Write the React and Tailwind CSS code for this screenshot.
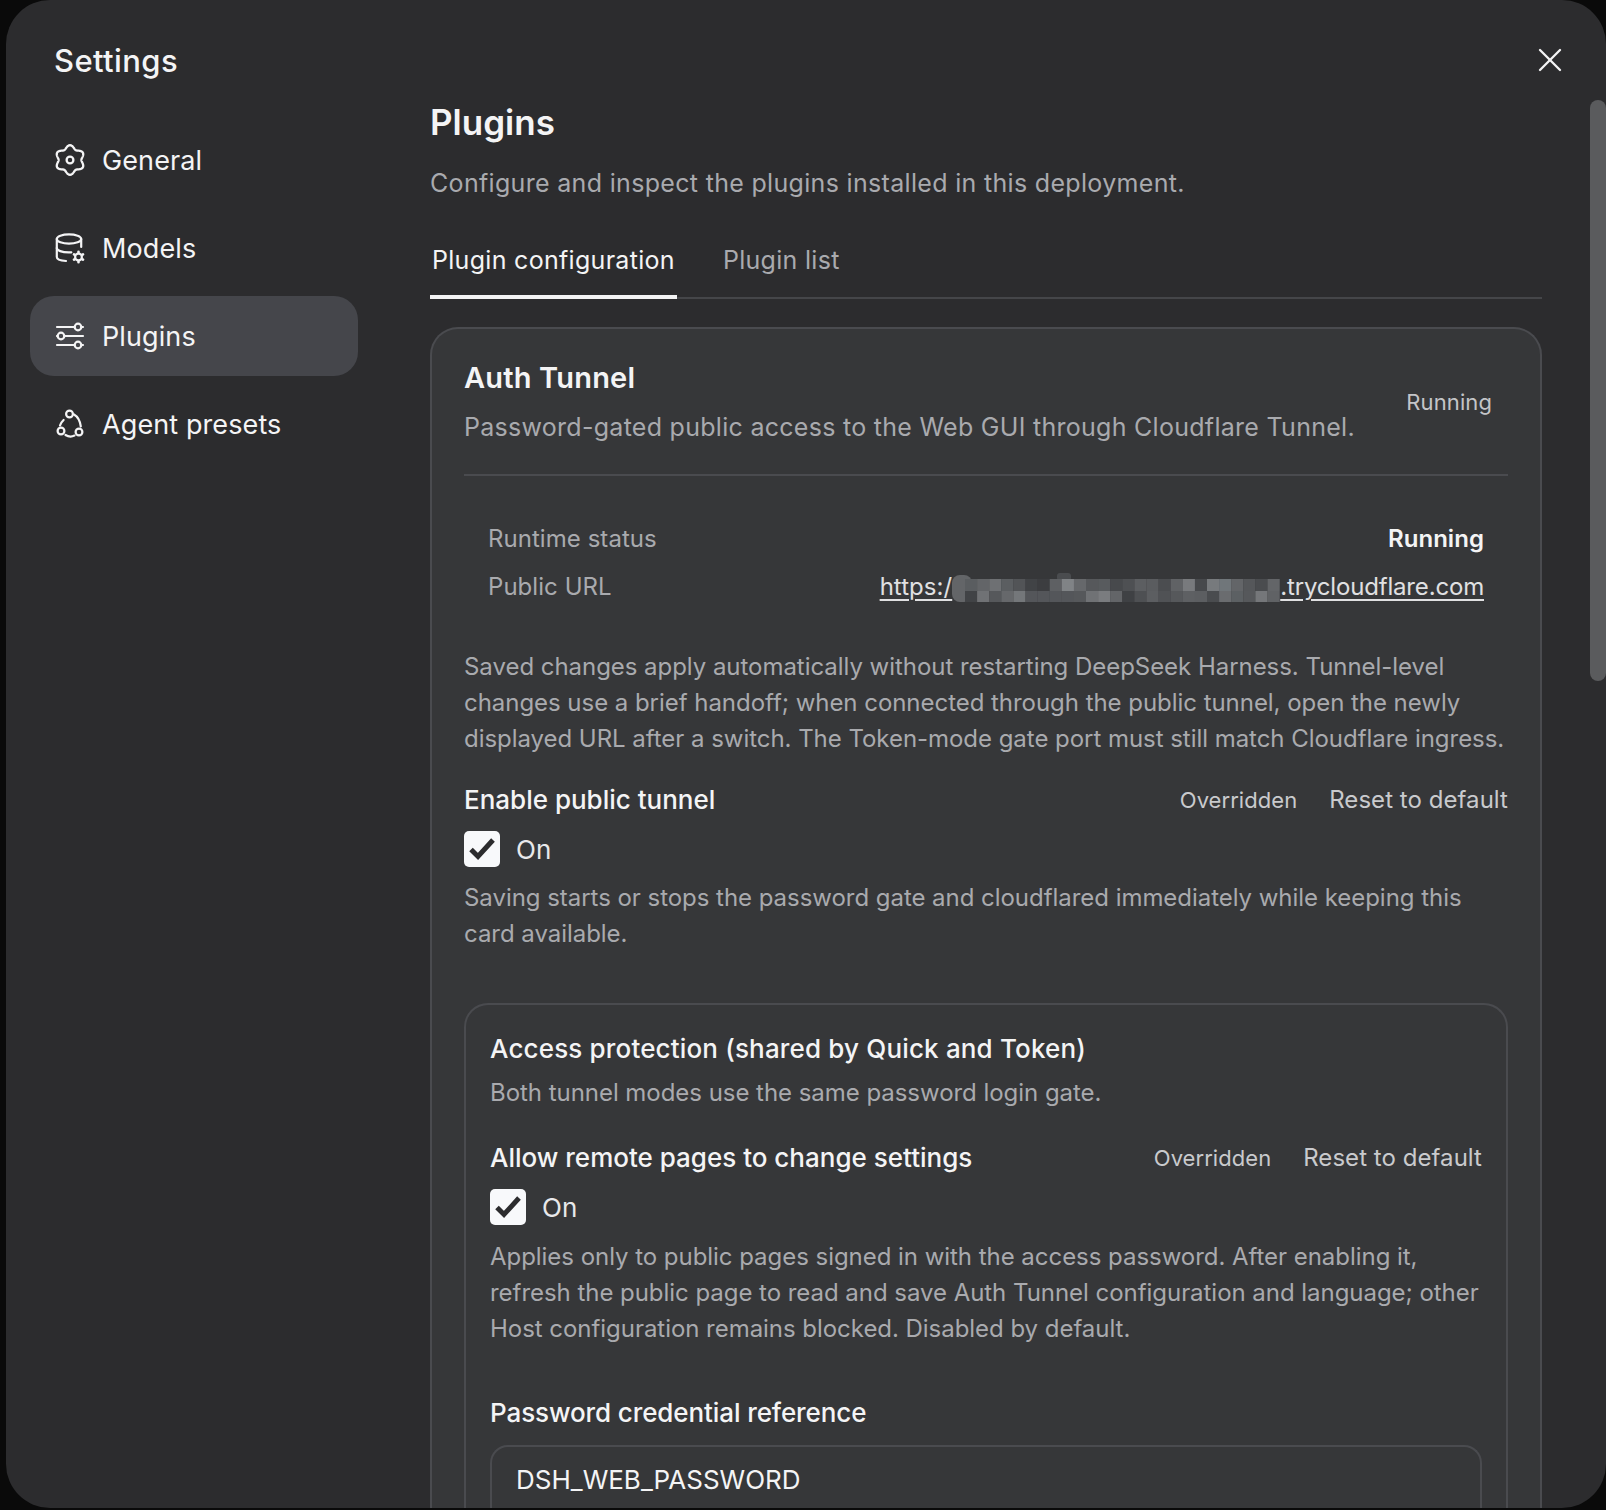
import React from "react";
import { X } from "lucide-react";

const F = "font-['Inter',sans-serif]";
const BODY = "text-[24px] leading-9 tracking-[-0.04px] text-[#a9aaae]";

function flower() {
  const pts = [];
  for (let i = 0; i < 180; i++) {
    const t = (i / 180) * Math.PI * 2;
    const r = 13.1 + 1.7 * Math.cos(6 * t);
    pts.push(`${(16 + r * Math.sin(t)).toFixed(2)},${(16 - r * Math.cos(t)).toFixed(2)}`);
  }
  return pts.join(" ");
}

function GearIcon() {
  return (
    <svg width="32" height="32" viewBox="0 0 32 32" fill="none" stroke="currentColor" strokeWidth="2.3" strokeLinejoin="round">
      <polygon points={flower()} />
      <circle cx="16" cy="16" r="3.4" />
    </svg>
  );
}
function DbIcon() {
  return (
    <svg width="32" height="32" viewBox="0 0 32 32" fill="none" stroke="currentColor" strokeWidth="2.2" strokeLinecap="round">
      <ellipse cx="15" cy="7" rx="12.2" ry="4.6" />
      <path d="M2.8 7v18c0 2 3.5 3.6 9.2 4" />
      <path d="M27.2 7v8" />
      <path d="M2.8 16c0 2.4 5 4.4 12 4.4 1 0 1.6 0 2.5-.1" />
      <circle cx="24.5" cy="25" r="3.4" />
      <path strokeWidth="2.6" d="M24.5 20.4v-.6M24.5 30.2v-.6M20.5 22.7l-.5-.3M29 27.6l-.5-.3M20.5 27.3l-.5.3M29 22.4l-.5.3" />
    </svg>
  );
}
function SlidersIcon() {
  return (
    <svg width="32" height="32" viewBox="0 0 32 32" fill="none" stroke="currentColor" strokeWidth="2.2" strokeLinecap="round">
      <path d="M3 7h17.5M27.5 7H29" />
      <circle cx="24" cy="7" r="3.3" />
      <path d="M3 16h.5M10.5 16H29" />
      <circle cx="7" cy="16" r="3.3" />
      <path d="M3 25h17.5M27.5 25H29" />
      <circle cx="24" cy="25" r="3.3" />
    </svg>
  );
}
function NodesIcon() {
  return (
    <svg width="32" height="32" viewBox="0 0 32 32" fill="none" stroke="currentColor" strokeWidth="2.2" strokeLinecap="round">
      <circle cx="15.5" cy="6" r="3.4" />
      <circle cx="7" cy="23" r="3.4" />
      <circle cx="25" cy="24" r="3.4" />
      <path d="M9.6 12C8 13.5 6.6 15 6 17.5" />
      <path d="M20 6.5c3.5 2 6 6 6.8 12" />
      <path d="M11.5 27c3 1.9 6 2 9 .6" />
    </svg>
  );
}

function NavItem({ icon, label, active }) {
  return (
    <div className={`flex h-20 items-center gap-4 rounded-3xl pl-[24px] text-[27px] tracking-[0.1px] text-[#f4f4f5] ${active ? "bg-[#45464b]" : ""}`}>
      {icon}
      <span className="pt-0.5">{label}</span>
    </div>
  );
}

function Toggle() {
  return (
    <div className="mt-[9px] flex items-center gap-4">
      <span className="flex h-9 w-9 items-center justify-center rounded-[5px] bg-[#f8f9fb]">
        <svg width="36" height="36" viewBox="0 0 36 36" fill="none" stroke="#2c2c2e" strokeWidth="5">
          <path d="M7 18.5l7 7L29 9" />
        </svg>
      </span>
      <span className="pt-0.5 text-[26px] text-[#e8e8ea]">On</span>
    </div>
  );
}

function FieldHead({ label }) {
  return (
    <div className="flex items-center justify-between">
      <span className="text-[26px] font-medium text-[#f4f4f5]">{label}</span>
      <div className="flex items-center gap-8 pt-px tracking-[0.05px] text-[#c9cacd]">
        <span className="text-[22px]">Overridden</span>
        <span className="text-[24px]">Reset to default</span>
      </div>
    </div>
  );
}

const row1 = ["#5a5d60","#636568","#6e7073","#5b5e61","#525457","#414346","#3c3d40","#5e6063","#808386","#66686b","#56585b","#585b5e","#47494c","#4e5053","#5c5e61","#5a5c5f","#4b4d50","#606265","#787a7d","#47494c","#777a7d","#70767a","#636568","#55575a","#4a4c4f","#636568"];
const row2 = ["#414346","#707275","#56585b","#66686b","#74777a","#54565a","#54565a","#54565a","#54565a","#56585b","#707275","#7a7c7f","#636568","#3f4144","#4e5053","#5c5e61","#505255","#56585b","#5e6063","#5c5e61","#4a4c4f","#6a6c6f","#5c6063","#56585b","#75777a","#606265"];

function Mosaic() {
  return (
    <svg className="inline-block align-middle" width="328" height="30" viewBox="0 0 328 30">
      <rect x="0" y="2" width="20" height="27" rx="8" fill="#636568" />
      <rect x="105" y="0" width="14" height="8" rx="3" fill="#4a4c4f" />
      {row1.map((c, i) => <rect key={i} x={13 + i * 12.1} y="6" width="12.2" height="12" fill={c} />)}
      {row2.map((c, i) => <rect key={i} x={13 + i * 12.1} y="18" width="12.2" height="11" fill={c} />)}
    </svg>
  );
}

export default function App() {
  return (
    <div className={`h-[1510px] w-[1606px] overflow-hidden bg-[#0a0a0a] pl-1.5 ${F}`}>
      <div className="relative flex h-[1508px] w-[1600px] overflow-hidden rounded-[44px] bg-[#2c2c2e] antialiased">
        <aside className="w-[424px] shrink-0 pl-6 pt-[41px]">
          <h1 className="pl-6 text-[31px] leading-10 font-medium tracking-[0.4px] text-[#f4f4f5]">Settings</h1>
          <nav className="mt-[39px] flex w-[328px] flex-col gap-2">
            <NavItem icon={<GearIcon />} label="General" />
            <NavItem icon={<DbIcon />} label="Models" />
            <NavItem icon={<SlidersIcon />} label="Plugins" active />
            <NavItem icon={<NodesIcon />} label="Agent presets" />
          </nav>
        </aside>
        <main className="w-[1112px] shrink-0 pt-[100px]">
          <h2 className="text-[35px] leading-11 font-semibold text-[#f4f4f5]">Plugins</h2>
          <p className="mt-[21px] text-[25px] leading-9 tracking-[0.32px] text-[#a9aaae]">Configure and inspect the plugins installed in this deployment.</p>
          <div className="mt-[40px] flex gap-[46px] border-b-2 border-[#454649] text-[25px] leading-[39px] tracking-[0.3px]">
            <div className="-mb-0.5 border-b-4 border-[#f4f4f5] px-0.5 pb-[15px] text-[#f4f4f5]">Plugin configuration</div>
            <div className="text-[#a9aaae]">Plugin list</div>
          </div>
          <section className="mt-[28px] rounded-t-[28px] border-2 border-b-0 border-[#4a4b4f] bg-[#363739] px-8 pt-[31px]">
            <div className="flex items-center justify-between border-b-2 border-[#4a4b4f] pb-[29px] pr-4">
              <div>
                <h3 className="text-[29px] leading-9 font-semibold tracking-[0.18px] text-[#f4f4f5]">Auth Tunnel</h3>
                <p className="mt-[13px] text-[25px] leading-9 tracking-[0.28px] text-[#a9aaae]">Password-gated public access to the Web GUI through Cloudflare Tunnel.</p>
              </div>
              <span className="text-[22px] tracking-[0.1px] text-[#c4c5c8]">Running</span>
            </div>
            <dl className="mt-[45px] flex flex-col gap-[12px] px-6 text-[24px] tracking-[0.05px]">
              <div className="flex h-9 items-center justify-between">
                <dt className="text-[#a9aaae]">Runtime status</dt>
                <dd className="font-semibold text-[#f4f4f5]">Running</dd>
              </div>
              <div className="flex h-9 items-center justify-between">
                <dt className="text-[#a9aaae]">Public URL</dt>
                <dd className="text-[#e0e0e2] underline underline-offset-4">
                  https:/<Mosaic /><span className="tracking-[-0.17px]">.trycloudflare.com</span>
                </dd>
              </div>
            </dl>
            <p className={`mt-[44px] ${BODY}`}>
              Saved changes apply automatically without restarting DeepSeek Harness. Tunnel-level changes use a brief handoff; when connected through the public tunnel, open the newly displayed URL after a switch. The Token-mode gate port must still match Cloudflare ingress.
            </p>
            <div className="mt-[23px]"><FieldHead label="Enable public tunnel" /></div>
            <Toggle />
            <p className={`mt-[11px] ${BODY}`}>
              Saving starts or stops the password gate and cloudflared immediately while keeping this card available.
            </p>
            <div className="mt-[51px] rounded-t-[24px] border-2 border-b-0 border-[#4a4b4f] px-6 pt-[26px]">
              <h4 className="text-[26px] leading-9 font-medium tracking-[0.16px] text-[#f4f4f5]">Access protection (shared by Quick and Token)</h4>
              <p className={`mt-[8px] ${BODY}`}>Both tunnel modes use the same password login gate.</p>
              <div className="mt-[27px]"><FieldHead label="Allow remote pages to change settings" /></div>
              <Toggle />
              <p className={`mt-[12px] ${BODY}`}>
                Applies only to public pages signed in with the access password. After enabling it, refresh the public page to read and save Auth Tunnel configuration and language; other Host configuration remains blocked. Disabled by default.
              </p>
              <div className="mt-[48px] text-[26px] font-medium leading-9 tracking-[-0.1px] text-[#f4f4f5]">Password credential reference</div>
              <div className="mt-[14px] flex h-[120px] items-start rounded-t-[18px] border-2 border-b-0 border-[#4a4b4f] px-6 pt-[13px] text-[26px] text-[#f4f4f5]">DSH_WEB_PASSWORD</div>
            </div>
          </section>
        </main>
        <button className="absolute right-[36px] top-[40px] text-[#f4f4f5]"><X size={40} strokeWidth={1.4} /></button>
        <div className="absolute right-0 top-[100px] h-[581px] w-4 rounded-lg bg-[#5a5b5d]" />
      </div>
    </div>
  );
}
